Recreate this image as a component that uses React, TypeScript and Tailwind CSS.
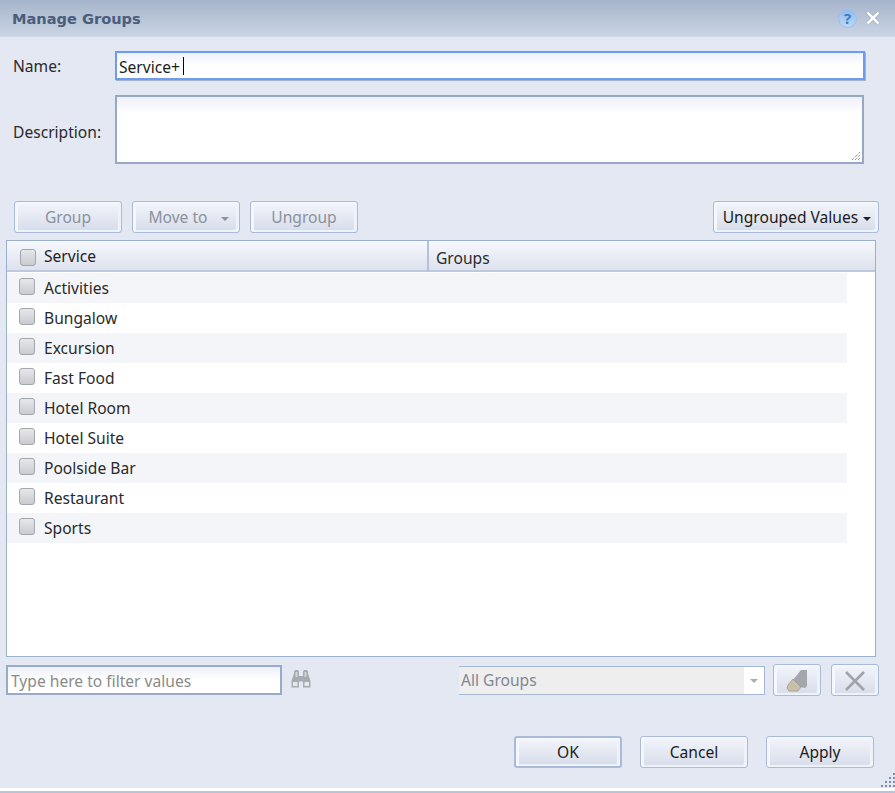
import { ReactNode } from "react";

const SERVICES = ["Activities", "Bungalow", "Excursion", "Fast Food", "Hotel Room", "Hotel Suite", "Poolside Bar", "Restaurant", "Sports"];

function Btn({ children, className = "", disabled = false }: { children: ReactNode; className?: string; disabled?: boolean }) {
  return (
    <button
      className={
        "flex items-center justify-center h-[32px] pt-px rounded-[3px] border border-[#a9bbd8] bg-gradient-to-b from-[#f3f5fa] to-[#d6dcea] shadow-[inset_3px_2px_0_#f4f7fc,inset_-3px_-2px_0_#eef2f9] text-[15.6px] " +
        (disabled ? "text-[#8b929c] " : "text-[#1c1c1c] ") +
        className
      }
    >
      {children}
    </button>
  );
}

function Check({ header = false }: { header?: boolean }) {
  return (
    <span
      className={
        "block w-[16px] h-[17px] rounded-[3px] border border-[#a3a6ab] bg-gradient-to-b from-[#e6e7ea] to-[#c9cbd0] shrink-0 " +
        (header ? "mt-[1px]" : "-mt-[4px]")
      }
    />
  );
}

function Caret({ color }: { color: string }) {
  return (
    <svg width="8" height="4" viewBox="0 0 8 4" className="shrink-0 mt-[2px]">
      <path d="M0 0H8L4 4Z" fill={color} />
    </svg>
  );
}

export default function App() {
  return (
    <div className="w-[895px] h-[793px] overflow-hidden bg-white font-['Noto_Sans','DejaVu_Sans',sans-serif] text-[15.6px] text-[#2a2a2a] flex flex-col">
      <div className="h-[788px] bg-[#e4e8f3] flex flex-col relative">
        {/* Title bar */}
        <div className="h-[37px] shrink-0 bg-gradient-to-b from-[#a6b4cb] to-[#c9d4e4] border-b border-[#d3dbe8] flex items-center pl-[12px] pr-[14px]">
          <span className="font-['DejaVu_Sans',sans-serif] font-bold text-[14.6px] text-[#4a5d7b] mt-[2px]">Manage Groups</span>
          <span className="ml-auto flex items-center gap-[8px]">
            <span className="w-[19px] h-[19px] rounded-full bg-gradient-to-b from-[#8fbcee] to-[#bcd9f5] border border-[#9cc0ea] text-[#3c78d0] font-bold text-[15px] leading-[17px] text-center">?</span>
            <svg width="16" height="16" viewBox="0 0 16 16">
              <path d="M2.5 2.5L13.5 13.5M13.5 2.5L2.5 13.5" stroke="#8d96a6" strokeWidth="3.8" />
              <path d="M2.5 2.5L13.5 13.5M13.5 2.5L2.5 13.5" stroke="#fff" strokeWidth="2.8" />
            </svg>
          </span>
        </div>

        {/* Name + description */}
        <div className="flex items-center mt-[14px] pl-[13px]">
          <span className="w-[102px] mt-[3px]">Name:</span>
          <div className="w-[750px] h-[29px] border-2 border-[#6c9cf0] bg-gradient-to-b from-[#eef1f7] to-white to-50% shadow-[1px_1px_0_#a4b1c8] flex items-center pl-[2px] pt-[5px] text-[#1c1c1c]">
            Service+<span className="ml-[3px] w-px h-[18px] bg-black -mt-[4px]" />
          </div>
        </div>
        <div className="flex items-center mt-[15px] pl-[13px]">
          <span className="w-[102px] mt-[6px]">Description:</span>
          <div className="relative w-[749px] h-[69px] border-2 border-[#97a8c4] bg-gradient-to-b from-[#edf0f6] to-white to-[25%]">
            <svg width="10" height="10" viewBox="0 0 10 10" className="absolute right-[1px] bottom-[1px]">
              <path d="M1 9L9 1M4 9L9 4M7 9L9 7" stroke="#666" strokeWidth="1" strokeDasharray="1 1" />
            </svg>
          </div>
        </div>

        {/* Toolbar */}
        <div className="flex items-center gap-[10px] mt-[37px] pl-[14px] pr-[16px]">
          <Btn disabled className="w-[108px]">Group</Btn>
          <Btn disabled className="w-[108px] gap-[13px] pl-[5px]">
            Move to <Caret color="#8b929c" />
          </Btn>
          <Btn disabled className="w-[108px]">Ungroup</Btn>
          <Btn className="w-[166px] ml-auto gap-[5px] pl-[2px] border-[#8ea4c9]">
            Ungrouped Values <Caret color="#222" />
          </Btn>
        </div>

        {/* Table */}
        <div className="mt-[7px] ml-[6px] w-[870px] h-[417px] bg-white border border-[#9bb0cf]">
          <div className="h-[31px] flex bg-gradient-to-b from-[#f6f8fc] to-[#dde2ee] border-b-2 border-[#bcc9de]">
            <div className="w-[422px] flex items-center gap-[8px] pl-[13px] border-r-2 border-[#b4c2d8] -mb-[2px] text-[#222]">
              <Check header />
              <span>Service</span>
            </div>
            <div className="pl-[7px] flex items-center pt-[6px]">Groups</div>
          </div>
          <div className="w-[840px] mt-[1px]">
            {SERVICES.map((s, i) => (
              <div key={s} className={"h-[30px] flex items-center gap-[9px] pl-[12px] " + (i % 2 === 0 ? "bg-[#f4f5f8]" : "bg-white")}>
                <Check />
                <span className="mt-[2px]">{s}</span>
              </div>
            ))}
          </div>
        </div>

        {/* Filter row */}
        <div className="flex items-center mt-[7px] pl-[6px] pr-[16px]">
          <div className="w-[276px] h-[30px] border-2 border-[#9aabc8] bg-gradient-to-b from-[#ecf0f6] to-white to-50% flex items-center pl-[3px] pt-[4px] text-[#8a8a8a]">
            Type here to filter values
          </div>
          <svg width="22" height="20" viewBox="0 0 22 20" className="ml-[8px] -mt-[2px]">
            <path d="M4 4.5V2.5L5 1h3l1 1.500V7h4V2.500L14 1h3l1 1.500V4.500L20.500 12V18.500H13V12.500H9V18.500H1.500V12z" fill="#a6abb0" />
            <path d="M3 13v4h4.500v-4zM14.500 13v4H19v-4z" fill="#e3e7ee" />
            <path d="M5.500 3h2v5h-2zM14.500 3h2v5h-2z" fill="#d2d6dc" />
          </svg>
          <div className="ml-[147px] w-[306px] h-[29px] flex border border-[#a6b8d6] border-l-0 bg-white">
            <div className="flex-1 bg-[#eeeeee] flex items-center pl-[2px] pt-[2px] text-[#808792] h-[27px]">All Groups</div>
            <div className="w-[20px] flex items-center justify-center">
              <Caret color="#a9adb3" />
            </div>
          </div>
          <Btn className="w-[48px] ml-[8px] h-[31px]">
            <svg width="26" height="26" viewBox="0 0 26 26">
              <path d="M17 2h6v16l-2 2-5-1-7-7z" fill="#a4a8ad" />
              <path d="M9 11l-5 6-1 3 2 3h9l3-4z" fill="#c9c0a8" stroke="#8f8a7a" strokeWidth="0.6" />
            </svg>
          </Btn>
          <Btn className="w-[48px] ml-[10px] h-[31px]">
            <svg width="22" height="22" viewBox="0 0 22 22">
              <path d="M2 2L20 20M20 2L2 20" stroke="#a0a4a9" strokeWidth="2.6" />
            </svg>
          </Btn>
        </div>

        {/* Actions */}
        <div className="flex items-center gap-[18px] mt-[40px] pl-[514px]">
          <Btn className="w-[108px] border-[#2aa0c6] border-2 shadow-[inset_1px_1px_0_#f6f8fc]">OK</Btn>
          <Btn className="w-[108px]">Cancel</Btn>
          <Btn className="w-[108px]">Apply</Btn>
        </div>

        <svg width="16" height="16" viewBox="0 0 16 16" className="absolute right-0 bottom-0">
          <path d="M14 1h2v2h-2zM10 5h2v2h-2zM14 5h2v2h-2zM6 9h2v2H6zM10 9h2v2h-2zM14 9h2v2h-2zM2 13h2v2H2zM6 13h2v2H6zM10 13h2v2h-2zM14 13h2v2h-2z" fill="#7f8ca3" />
        </svg>
      </div>
      <div className="h-[1px] bg-white mt-[2px]" />
      <div className="h-[2px] bg-[#b7c3d8]" />
    </div>
  );
}
